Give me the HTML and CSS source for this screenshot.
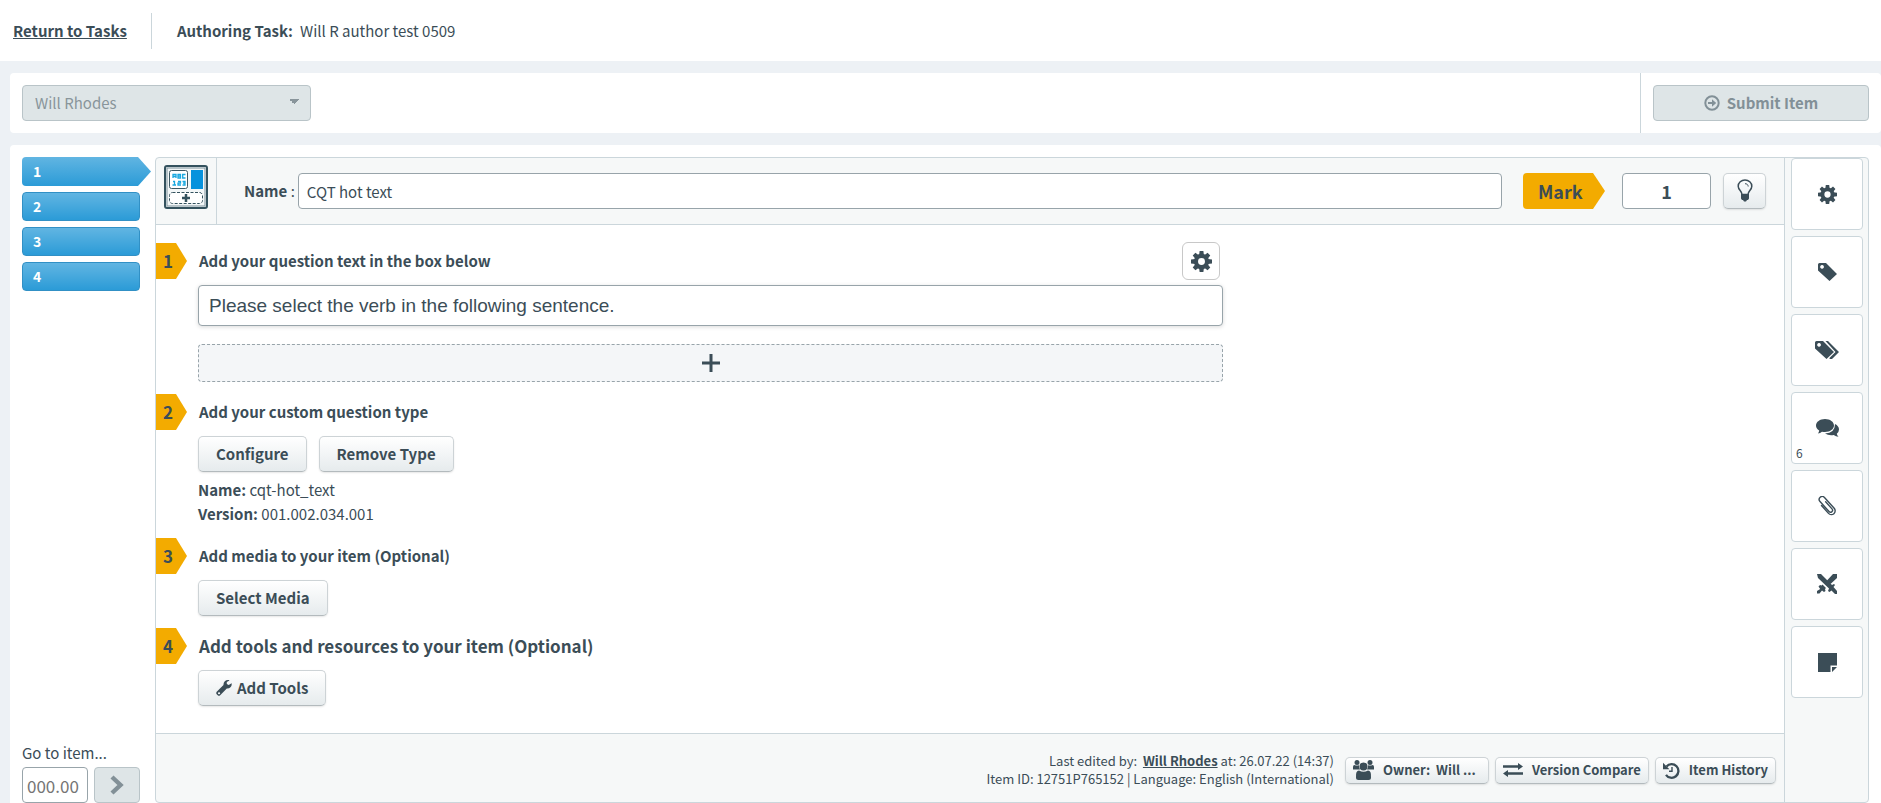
FILE: index.html
```html
<!DOCTYPE html>
<html lang="en">
<head>
    <meta charset="UTF-8">
    <meta name="viewport" content="width=device-width, initial-scale=1.0">
    <title>Authoring Task</title>
    <link rel="stylesheet" href="styles.css">
</head>
<body>

    <svg class="sprite" aria-hidden="true">
        <symbol id="gear" viewBox="0 0 20 20">
            <circle cx="10" cy="10" r="5.3" fill="none" stroke="currentColor" stroke-width="4"/>
            <path d="M7.700 4 8.200 0h3.600l.5 4zM7.700 16l.5 4h3.600l.5-4z"/>
            <path d="M7.700 4 8.200 0h3.600l.5 4zM7.700 16l.5 4h3.600l.5-4z" transform="rotate(45 10 10)"/>
            <path d="M7.700 4 8.200 0h3.600l.5 4zM7.700 16l.5 4h3.600l.5-4z" transform="rotate(90 10 10)"/>
            <path d="M7.700 4 8.200 0h3.600l.5 4zM7.700 16l.5 4h3.600l.5-4z" transform="rotate(135 10 10)"/>
        </symbol>
    </svg>

    <header class="top">
        <a class="back" href="#">Return to Tasks</a>
        <p class="task"><b>Authoring Task:</b> <span>Will R author test 0509</span></p>
    </header>

    <div class="toolbar">
        <select class="user" aria-label="User" disabled>
            <option>Will Rhodes</option>
        </select>
        <div class="submit-box">
            <button class="submit" disabled>
                <svg width="16" height="16" viewBox="0 0 16 16"><circle cx="8" cy="8" r="6.700" fill="none" stroke="currentColor" stroke-width="2"/><path d="M4 7h4V4.300L12.200 8 8 11.700V9H4z"/></svg>
                Submit Item
            </button>
        </div>
    </div>

    <main class="panel">
        <nav class="items">
            <button class="item item-active">1</button>
            <button class="item">2</button>
            <button class="item">3</button>
            <button class="item">4</button>
            <div class="goto">
                <label for="goto">Go to item...</label>
                <div class="goto-row">
                    <input id="goto" type="text" placeholder="000.00">
                    <button aria-label="Go" disabled>
                        <svg width="14" height="20" viewBox="0 0 14 20"><path d="M2 2l8.500 8L2 18" fill="none" stroke="currentColor" stroke-width="4.400"/></svg>
                    </button>
                </div>
            </div>
        </nav>

        <div class="frame">
            <section class="editor">
                <div class="editor-head">
                    <div class="type">
                        <svg width="44" height="44" viewBox="0 0 44 44">
                            <rect x="1" y="1" width="42" height="42" rx="2" fill="#f3f7f8" stroke="#34525e" stroke-width="2"/>
                            <rect x="3" y="3" width="38" height="38" fill="none" stroke="#7c919a"/>
                            <rect x="5.500" y="5.500" width="18" height="18" rx="2" fill="#fff" stroke="#3d5964"/>
                            <path d="M9 13V9.500h3V13M9 11.500h3M14 9.500h2.500V13H14zM14 11.200h2.500M21.500 9.500h-2.800V13h2.800M9 16.500h1.500V20M8.500 20h3.500M14 16.500h2.500v1.700H14V20h3M18.500 16.500h2.500V20h-2.500M19 18.200h2" fill="none" stroke="#19a8e0" stroke-width="1.300"/>
                            <rect x="27" y="5" width="12" height="19" fill="#0792dd"/>
                            <rect x="5.500" y="27.500" width="33" height="11" rx="3" fill="#fff" stroke="#34525e" stroke-dasharray="3 1.500"/>
                            <path d="M22 29v8M18 33h8" stroke="#34525e" stroke-width="2.500"/>
                        </svg>
                    </div>
                    <div class="name">
                        <label for="name"><b>Name</b> :</label>
                        <input id="name" type="text" value="CQT hot text">
                    </div>
                    <label class="mark" for="mark">Mark</label>
                    <input id="mark" class="mark-input" type="text" value="1">
                    <button class="btn bulb" aria-label="Hint">
                        <svg width="16" height="24" viewBox="0 0 16 24"><path d="M5 15.500C5 12 1.200 11 1.200 7.200a6.800 6.200 0 0 1 13.600 0C14.800 11 11 12 11 15.500z" fill="none" stroke="currentColor" stroke-width="1.500"/><path d="M8 4.700c2 0 3 1 3.200 2.800" fill="none" stroke="currentColor"/><path d="M4 15h8v4.500l-1 1.500H10l-1 1.500H7L6 21H5l-1-1.500z"/></svg>
                    </button>
                </div>

                <div class="steps">
                    <div class="step">
                        <div class="step-head">
                            <span class="num">1</span>
                            <h2>Add your question text in the box below</h2>
                            <button class="settings" aria-label="Question settings"><svg width="21" height="21"><use href="#gear"/></svg></button>
                        </div>
                        <div class="step-body">
                            <input class="question" type="text" aria-label="Question text" value="Please select the verb in the following sentence.">
                            <button class="add" aria-label="Add">
                                <svg width="18" height="18" viewBox="0 0 18 18"><path d="M9 0v18M0 9h18" stroke="currentColor" stroke-width="3"/></svg>
                            </button>
                        </div>
                    </div>

                    <div class="step">
                        <div class="step-head">
                            <span class="num">2</span>
                            <h2>Add your custom question type</h2>
                        </div>
                        <div class="step-body">
                            <div class="btns">
                                <button class="btn">Configure</button>
                                <button class="btn">Remove Type</button>
                            </div>
                            <p class="info"><b>Name:</b> cqt-hot_text<br><b>Version:</b> 001.002.034.001</p>
                        </div>
                    </div>

                    <div class="step">
                        <div class="step-head">
                            <span class="num">3</span>
                            <h2>Add media to your item (Optional)</h2>
                        </div>
                        <div class="step-body">
                            <button class="btn">Select Media</button>
                        </div>
                    </div>

                    <div class="step">
                        <div class="step-head">
                            <span class="num">4</span>
                            <h2 class="big">Add tools and resources to your item (Optional)</h2>
                        </div>
                        <div class="step-body">
                            <button class="btn">
                                <svg width="16" height="16" viewBox="0 0 16 16"><path d="M15.600 3.200 12.700 4.900 10.800 4 10.800 2 13.500.4C10.500-.7 7.200 1.500 7.500 5L.7 11.800a2 2 0 0 0 0 2.500l1 1a2 2 0 0 0 2.500 0L10.800 8.600c3.200.3 5.500-2.300 4.800-5.400zM3 14.200a1 1 0 1 1 .1 0z" fill-rule="evenodd"/></svg>
                                Add Tools
                            </button>
                        </div>
                    </div>
                </div>

                <footer class="foot">
                    <p class="edited">Last edited by: &nbsp;<a href="#">Will Rhodes</a> at: 26.07.22 (14:37)<br>Item ID: 12751P765152 | Language: English (International)</p>
                    <button class="btn small owner">
                        <svg width="21" height="20" viewBox="0 0 21 20"><circle cx="4" cy="2.500" r="2.500"/><circle cx="17" cy="2.500" r="2.500"/><path d="M0 9.500V7q0-2 1.500-2 2 1 4.500.3Q5.500 7.500 7 9.500zM21 9.500V7q0-2-1.500-2-2 1-4.500.3.5 2.200-1 4.200z"/><circle cx="10.500" cy="6.500" r="4"/><path d="M3 17.500Q2.500 10.500 6 10.500q4.500 2.500 9 0 3.500 0 3 7 0 2.500-2.500 2.500h-10Q3 20 3 17.500z"/></svg>
                        <span>Owner:&nbsp; Will ...</span>
                    </button>
                    <button class="btn small">
                        <svg width="20" height="14" viewBox="0 0 20 14"><path d="M0 2.300h15V0l5 3.500-5 3.500V4.700H0zM20 9.300H5V7l-5 3.500L5 14v-2.300h15z"/></svg>
                        <span>Version Compare</span>
                    </button>
                    <button class="btn small">
                        <svg width="17" height="17" viewBox="0 0 17 17"><path d="M3.500 4.500A6.800 6.800 0 1 1 3 12.800" fill="none" stroke="currentColor" stroke-width="2.300"/><path d="M0 .8v6.400h6.400z"/><path d="M9 5v4.300H6" fill="none" stroke="currentColor" stroke-width="1.400"/></svg>
                        <span>Item History</span>
                    </button>
                </footer>
            </section>

            <aside class="side">
                <button class="side-btn" aria-label="Settings"><svg width="19" height="19"><use href="#gear"/></svg></button>
                <button class="side-btn" aria-label="Tag">
                    <svg width="19" height="18" viewBox="0 0 19 18"><path d="M0 1.500Q0 0 1.500 0H8l11 11-7.500 7L0 7.500zM4 2a1.900 1.900 0 1 0 .1 0z" fill-rule="evenodd"/></svg>
                </button>
                <button class="side-btn" aria-label="Tags">
                    <svg width="24" height="18" viewBox="0 0 24 18"><path d="M0 1.500Q0 0 1.500 0H8l11 11-7.500 7L0 7.500zM4 2a1.900 1.900 0 1 0 .1 0z" fill-rule="evenodd"/><path d="M10.500 0H13l11 11-7 7h-2l-.8-.8 6.300-6.200z"/></svg>
                </button>
                <button class="side-btn" aria-label="Comments">
                    <svg width="23" height="18" viewBox="0 0 23 18"><path d="M9 0c5 0 9 2.900 9 6.500S14 13 9 13q-1.500 0-3-.3Q4 14.500 2 14.500q1-1.300 1.200-3Q0 9.600 0 6.500C0 2.900 4 0 9 0z"/><path d="M19 5q4 2 4 5.500 0 2.400-2.200 4.200.2 1.600 1.700 3.100-2.600 0-4.800-1.800-4.700 1-8.700-1.500Q19 14 19 5z"/></svg>
                    <span class="count">6</span>
                </button>
                <button class="side-btn" aria-label="Attachments">
                    <svg width="20" height="20" viewBox="0 0 20 20"><path d="M6.200 6v10.500a3.800 3.800 0 0 0 7.600 0V2a3 3 0 0 0-6 0v13.500a2 2 0 0 0 4 0V6" fill="none" stroke="currentColor" stroke-width="1.400" stroke-linecap="round" transform="rotate(-42 10 10)"/></svg>
                </button>
                <button class="side-btn" aria-label="Compare">
                    <svg width="20" height="20" viewBox="0 0 20 20"><path d="M0 0h4l11 11 2-1 1 1-1.500 2 3.500 4v3h-2l-3.500-3.500L12.500 18l-1.500-1 1-2.500L1 4zM20 0v4l-6.500 6L10 6.500 16 0zM5.500 10.500 9 14l-1 1 .5 2L7 18l-2-1.500L2.500 19.500H0V17l3.200-2L1.500 12.500 3 11l1.700.5z"/></svg>
                </button>
                <button class="side-btn" aria-label="Notes">
                    <svg width="19" height="19" viewBox="0 0 19 19"><path d="M0 0h19v12.500h-6.500V19H0zM14 14h5l-5 5z"/></svg>
                </button>
            </aside>
        </div>
    </main>

</body>
</html>
```
FILE: styles.css
```css
* {
    box-sizing: border-box;
}

body {
    margin: 0;
    min-height: 100vh;
    display: flex;
    flex-direction: column;
    gap: 12px;
    background-color: #edf1f5;
    color: #3b4d57;
    font-family: "Noto Sans CJK SC", "Open Sans", sans-serif;
    font-size: 15px;
    line-height: 24px;
}

p, h2 {
    margin: 0;
}

a {
    color: inherit;
    font-weight: bold;
}

button, input, select {
    font: inherit;
    color: inherit;
}

button {
    display: flex;
    align-items: center;
    justify-content: center;
    padding: 0;
}

svg {
    display: block;
    flex: none;
    fill: currentColor;
}

.sprite {
    position: absolute;
    width: 0;
    height: 0;
}

/* header */
.top {
    display: flex;
    align-items: center;
    height: 61px;
    padding: 0 13px;
    background-color: #fff;
}

.back {
    line-height: 36px;
    padding-right: 24px;
    border-right: 1px solid #cbd6db;
}

.task {
    display: flex;
    gap: 7px;
    padding-left: 25px;
}

.toolbar {
    display: flex;
    align-items: center;
    justify-content: space-between;
    height: 60px;
    margin-left: 10px;
    padding-left: 12px;
    border-radius: 4px;
    background-color: #fff;
}

.user {
    appearance: none;
    width: 289px;
    height: 36px;
    padding: 0 12px;
    border: 1px solid #b9c4c8;
    border-radius: 4px;
    color: #89959b;
    opacity: 1;
    background: conic-gradient(from -45deg at 50% 100%, #89959b 90deg, transparent 0) right 11px top 13px / 10px 5px no-repeat #dee5e7;
}

.submit-box {
    display: flex;
    align-items: center;
    height: 60px;
    padding: 0 12px;
    border-left: 1px solid #cbd6db;
}

.submit {
    gap: 7px;
    width: 216px;
    height: 36px;
    border: 1px solid #b9c4c8;
    border-radius: 4px;
    color: #829097;
    background-color: #dee5e7;
    font-weight: bold;
}

.panel {
    flex: 1;
    display: flex;
    gap: 15px;
    margin-left: 10px;
    padding: 12px 12px 0;
    border-radius: 4px 4px 0 0;
    background-color: #fff;
}

/* item list */
.items {
    display: flex;
    flex-direction: column;
    gap: 6px;
    width: 118px;
}

.item {
    justify-content: flex-start;
    height: 29px;
    padding: 0 0 2px 10px;
    border: 1px solid #3190c5;
    border-radius: 4px;
    background: linear-gradient(#61b5e2, #2b9bd7);
    color: #fff;
    font-size: 14px;
    font-weight: bold;
}

.item-active {
    width: 129px;
    border: 0;
    padding-left: 11px;
    clip-path: polygon(0 0, 116px 0, 100% 50%, 116px 100%, 0 100%);
}

.goto {
    margin-top: auto;
}

.goto-row {
    display: flex;
    gap: 6px;
    margin-top: 2px;
}

.goto-row input {
    width: 66px;
    height: 36px;
    padding: 0 4px;
    border: 1px solid #98a4aa;
    border-radius: 4px;
    font-size: 17px;
}

.goto-row input::placeholder {
    color: #757575;
}

.goto-row button {
    width: 46px;
    height: 36px;
    border: 1px solid #b9c4c8;
    border-radius: 4px;
    color: #829097;
    background-color: #dee5e7;
}

/* editor */
.frame {
    flex: 1;
    display: flex;
    border: 1px solid #cbd6db;
    border-radius: 4px;
    background-color: #f6f8f8;
}

.editor {
    flex: 1;
    display: flex;
    flex-direction: column;
    border-right: 1px solid #cbd6db;
}

.editor-head {
    display: flex;
    align-items: center;
    height: 67px;
    padding-right: 18px;
    border-bottom: 1px solid #cbd6db;
}

.type {
    width: 61px;
    height: 66px;
    padding: 7px 8px;
    border-right: 1px solid #cbd6db;
}

.name {
    flex: 1;
    display: flex;
    align-items: center;
    gap: 3px;
    padding-left: 27px;
}

.name input,
.mark-input {
    flex: 1;
    height: 36px;
    padding: 0 8px;
    border: 1px solid #98a4aa;
    border-radius: 4px;
    background-color: #fff;
}

.mark {
    width: 82px;
    margin: 0 17px 0 21px;
    padding-left: 15px;
    border-radius: 4px;
    background-color: #f3ab00;
    clip-path: polygon(0 0, 70px 0, 100% 50%, 70px 100%, 0 100%);
    font-size: 18px;
    line-height: 36px;
    font-weight: bold;
}

.mark-input {
    flex: none;
    width: 89px;
    margin-right: 12px;
    text-align: center;
    font-size: 18px;
    font-weight: bold;
}

.btn {
    gap: 5px;
    height: 36px;
    padding: 0 17px;
    border: 1px solid #cdd3d6;
    border-bottom-color: #b3babd;
    border-radius: 5px;
    background: linear-gradient(#fff, #e6ebed);
    box-shadow: 0 1px 2px rgba(0, 0, 0, .1);
    font-weight: bold;
    white-space: nowrap;
}

.bulb {
    width: 43px;
    padding: 0;
}

.steps {
    flex: 1;
    display: flex;
    flex-direction: column;
    gap: 12px;
    padding: 18px 0 27px;
    background-color: #fff;
}

.step-head {
    display: flex;
    align-items: center;
    width: 1064px;
    max-width: 100%;
    height: 36px;
}

.step-head h2 {
    flex: 1;
    padding-left: 12px;
    font-size: 15px;
}

.step-head .big {
    font-size: 17px;
}

.num {
    width: 31px;
    padding-left: 7px;
    background-color: #f3ab00;
    clip-path: polygon(0 0, 20px 0, 100% 50%, 20px 100%, 0 100%);
    font-size: 17px;
    line-height: 36px;
    font-weight: bold;
}

.settings {
    width: 38px;
    height: 38px;
    border: 1px solid #c8c8c8;
    border-radius: 6px;
    background-color: #fff;
}

.step-body {
    width: 1067px;
    max-width: 100%;
    padding: 6px 0 0 42px;
}

.question {
    display: block;
    width: 100%;
    height: 41px;
    margin-bottom: 18px;
    padding: 0 10px;
    border: 1px solid #98a4aa;
    border-radius: 4px;
    box-shadow: 0 1px 4px rgba(0, 0, 0, .15);
    font-family: "Liberation Sans", Arial, sans-serif;
    font-size: 19px;
}

.add {
    width: 100%;
    height: 38px;
    border: 1px dashed #98a4aa;
    border-radius: 4px;
    background-color: #f4f6f8;
}

.btns {
    display: flex;
    gap: 12px;
}

.info {
    padding-top: 6px;
}

/* footer */
.foot {
    display: flex;
    align-items: center;
    justify-content: flex-end;
    gap: 6px;
    height: 69px;
    padding: 4px 8px 0 0;
    border-top: 1px solid #cbd6db;
}

.edited {
    margin-right: 5px;
    font-size: 13px;
    line-height: 18px;
    text-align: right;
}

.small {
    gap: 9px;
    height: 27px;
    padding: 0 7px;
    font-size: 13px;
}

.owner {
    width: 144px;
    justify-content: flex-start;
}

/* side buttons */
.side {
    display: flex;
    flex-direction: column;
    gap: 6px;
    padding: 0 5px 0 6px;
}

.side-btn {
    position: relative;
    width: 72px;
    height: 72px;
    border: 1px solid #cbd6db;
    border-radius: 4px;
    background-color: #fff;
}

.count {
    position: absolute;
    left: 4px;
    bottom: 0;
    font-size: 12px;
    line-height: 20px;
}
```
